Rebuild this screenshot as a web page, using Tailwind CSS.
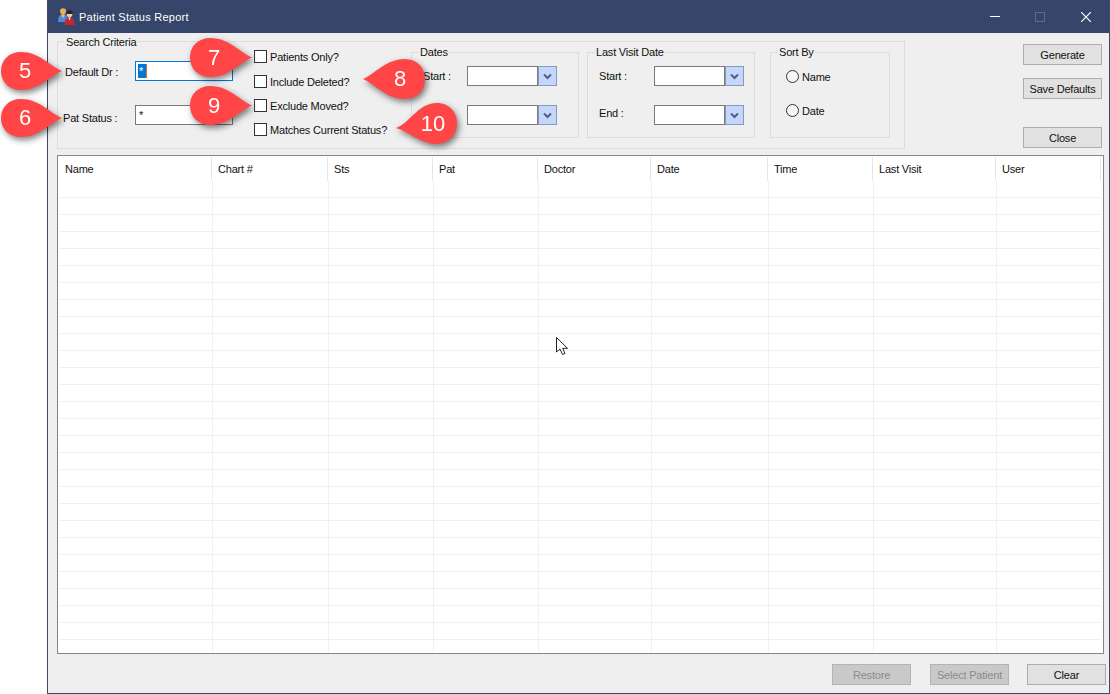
<!DOCTYPE html>
<html lang="en">
<head>
    <meta charset="UTF-8">
    <title>Patient Status Report</title>
    <script src="https://cdn.jsdelivr.net/npm/@tailwindcss/browser@4"></script>
</head>
<body class="bg-white">
<div class="relative flex w-[1110px] h-[694px] overflow-hidden bg-white font-['Liberation_Sans',Arial,sans-serif] text-[11px] tracking-[-0.2px] leading-none text-[#111]">
    <!-- Left of the window -->
    <div class="w-[47px] shrink-0"></div>

    <!-- Window -->
    <div class="flex flex-col flex-1 border-x border-b border-[#3a4a6c] bg-[#efefef]">
        <!-- Title bar -->
        <header class="flex items-center h-[33px] shrink-0 bg-[#35466a] text-white">
            <svg class="ml-[10px] w-[17px] h-[17px]" viewBox="0 0 17 17">
                <circle cx="5" cy="3.2" r="3" fill="#e8b25a"/>
                <path d="M0 14 C0 8 2.5 6 5 6 C7.5 6 10 8 10 14 Z" fill="#4a8ae0"/>
                <path d="M3.2 6.2 L6.8 6.2 L5.8 9.5 L4.2 9.5 Z" fill="#e8c04a"/>
                <circle cx="11.5" cy="6.5" r="2.8" fill="#f0c9a0"/>
                <path d="M8 4.5 L11.5 1.5 L15 4.5 L14.5 6 L8.5 6 Z" fill="#1d2433"/>
                <path d="M6.5 17 C6.5 11.5 8.5 9.5 11.5 9.5 C14.5 9.5 16.5 11.5 16.5 17 Z" fill="#c9252d"/>
                <path d="M10.3 9.5 L12.7 9.5 L11.5 12.5 Z" fill="#f4f4f4"/>
            </svg>
            <span class="ml-[4px] mt-px text-[11px] tracking-[0.25px]">Patient Status Report</span>
            <div class="ml-auto flex items-center">
                <div class="flex justify-center items-center w-[46px] h-[33px] pl-[2px]"><div class="w-[10px] h-px bg-white"></div></div>
                <div class="flex justify-center items-center w-[46px] h-[33px]"><div class="w-[10px] h-[10px] border border-[#5d6c8c]"></div></div>
                <div class="flex justify-center items-center w-[46px] h-[33px]">
                    <svg class="w-[10px] h-[10px]" viewBox="0 0 10 10"><path d="M0 0 L10 10 M10 0 L0 10" stroke="#fff" stroke-width="1.2"/></svg>
                </div>
            </div>
        </header>

        <main class="flex flex-col flex-1 pl-[9px] pr-[5px] pt-[8px]">
            <!-- Search area -->
            <div class="flex h-[108px] shrink-0">
                <section class="relative flex w-[848px] h-[108px] border border-[#dcdcdc]">
                    <span class="absolute -top-[5px] left-[7px] px-px bg-[#efefef]">Search Criteria</span>

                    <div class="flex flex-col w-[196px] pt-[19px]">
                        <div class="flex h-[20px] items-center">
                            <label class="w-[77px] pl-[7px] mt-[2px]">Default Dr :</label>
                            <div class="w-[98px] h-[20px] border border-[#0078d7] bg-white pl-[2px] pt-[2px]">
                                <div class="flex w-[9px] h-[14px] bg-[#0078d7] text-white pl-[1px] pt-[2px] border-r border-[#e07020]">*</div>
                            </div>
                        </div>
                        <div class="flex h-[20px] items-center mt-[24px]">
                            <label class="w-[77px] pl-[5px] mt-[6px]">Pat Status :</label>
                            <div class="w-[98px] h-[20px] border border-[#7a7a7a] bg-white pl-[3px] pt-[4px]">*</div>
                        </div>
                    </div>

                    <div class="flex flex-col w-[157px]">
                        <label class="flex items-center mt-[8px] h-[13px]"><span class="w-[13px] h-[13px] border border-[#333] bg-white"></span><span class="ml-[3px] mt-[2px]">Patients Only?</span></label>
                        <label class="flex items-center mt-[12px] h-[13px]"><span class="w-[13px] h-[13px] border border-[#333] bg-white"></span><span class="ml-[3px] mt-[2px]">Include Deleted?</span></label>
                        <label class="flex items-center mt-[11px] h-[13px]"><span class="w-[13px] h-[13px] border border-[#333] bg-white"></span><span class="ml-[3px] mt-[2px]">Exclude Moved?</span></label>
                        <label class="flex items-center mt-[11px] h-[13px]"><span class="w-[13px] h-[13px] border border-[#333] bg-white"></span><span class="ml-[3px] mt-[2px]">Matches Current Status?</span></label>
                    </div>

                    <!-- Dates -->
                    <fieldset class="relative flex flex-col w-[168px] h-[86px] mt-[10px] pt-[13px] border border-[#dcdcdc]">
                        <span class="absolute -top-[6px] left-[7px] px-px bg-[#efefef]">Dates</span>
                        <div class="flex h-[20px] items-center">
                            <label class="w-[55px] pl-[11px]">Start :</label>
                            <div class="w-[71px] h-[20px] border border-[#7a7a7a] bg-white"></div>
                            <div class="flex w-[19px] h-[20px] items-center justify-center border border-[#7f9db9] bg-[#c5d6fc]">
                                <svg class="w-[9px] h-[7px]" viewBox="0 0 9 7"><path d="M1 1.5 L4.5 5 L8 1.5" fill="none" stroke="#4d6185" stroke-width="2"/></svg>
                            </div>
                        </div>
                        <div class="flex h-[20px] items-center mt-[19px]">
                            <div class="w-[55px]"></div>
                            <div class="w-[71px] h-[20px] border border-[#7a7a7a] bg-white"></div>
                            <div class="flex w-[19px] h-[20px] items-center justify-center border border-[#7f9db9] bg-[#c5d6fc]">
                                <svg class="w-[9px] h-[7px]" viewBox="0 0 9 7"><path d="M1 1.5 L4.5 5 L8 1.5" fill="none" stroke="#4d6185" stroke-width="2"/></svg>
                            </div>
                        </div>
                    </fieldset>

                    <!-- Last visit date -->
                    <fieldset class="relative flex flex-col w-[168px] h-[86px] mt-[10px] ml-[8px] pt-[13px] border border-[#dcdcdc]">
                        <span class="absolute -top-[6px] left-[7px] px-px bg-[#efefef]">Last Visit Date</span>
                        <div class="flex h-[20px] items-center">
                            <label class="w-[66px] pl-[11px]">Start :</label>
                            <div class="w-[71px] h-[20px] border border-[#7a7a7a] bg-white"></div>
                            <div class="flex w-[19px] h-[20px] items-center justify-center border border-[#7f9db9] bg-[#c5d6fc]">
                                <svg class="w-[9px] h-[7px]" viewBox="0 0 9 7"><path d="M1 1.5 L4.5 5 L8 1.5" fill="none" stroke="#4d6185" stroke-width="2"/></svg>
                            </div>
                        </div>
                        <div class="flex h-[20px] items-center mt-[19px]">
                            <label class="w-[66px] pl-[11px] -mt-[4px]">End :</label>
                            <div class="w-[71px] h-[20px] border border-[#7a7a7a] bg-white"></div>
                            <div class="flex w-[19px] h-[20px] items-center justify-center border border-[#7f9db9] bg-[#c5d6fc]">
                                <svg class="w-[9px] h-[7px]" viewBox="0 0 9 7"><path d="M1 1.5 L4.5 5 L8 1.5" fill="none" stroke="#4d6185" stroke-width="2"/></svg>
                            </div>
                        </div>
                    </fieldset>

                    <!-- Sort by -->
                    <fieldset class="relative flex flex-col w-[120px] h-[86px] mt-[10px] ml-[15px] pt-[17px] pl-[15px] border border-[#dcdcdc]">
                        <span class="absolute -top-[6px] left-[7px] px-px bg-[#efefef]">Sort By</span>
                        <label class="flex items-center h-[13px]"><span class="w-[13px] h-[13px] rounded-full border border-[#333] bg-[#f6f6f6]"></span><span class="ml-[3px] mt-px">Name</span></label>
                        <label class="flex items-center h-[13px] mt-[21px]"><span class="w-[13px] h-[13px] rounded-full border border-[#333] bg-[#f6f6f6]"></span><span class="ml-[3px] mt-px">Date</span></label>
                    </fieldset>
                </section>

                <div class="flex flex-col w-[79px] ml-[118px] pt-[3px]">
                    <button class="h-[21px] pt-px border border-[#adadad] bg-[#e1e1e1]">Generate</button>
                    <button class="h-[21px] pt-px mt-[13px] border border-[#adadad] bg-[#e1e1e1]">Save Defaults</button>
                    <button class="h-[21px] pt-px mt-[28px] border border-[#adadad] bg-[#e1e1e1]">Close</button>
                </div>
            </div>

            <!-- Results list -->
            <div class="flex flex-col h-[499px] mt-[6px] shrink-0 border border-[#85858c] bg-white">
                <div class="flex h-[25px] pl-px shrink-0">
                    <div class="w-[153px] h-[24px] mt-px pl-[6px] pt-[7px] border-r border-[#e6e6e6]">Name</div>
                    <div class="w-[116px] h-[24px] mt-px pl-[6px] pt-[7px] border-r border-[#e6e6e6]">Chart #</div>
                    <div class="w-[105px] h-[24px] mt-px pl-[6px] pt-[7px] border-r border-[#e6e6e6]">Sts</div>
                    <div class="w-[105px] h-[24px] mt-px pl-[6px] pt-[7px] border-r border-[#e6e6e6]">Pat</div>
                    <div class="w-[113px] h-[24px] mt-px pl-[6px] pt-[7px] border-r border-[#e6e6e6]">Doctor</div>
                    <div class="w-[117px] h-[24px] mt-px pl-[6px] pt-[7px] border-r border-[#e6e6e6]">Date</div>
                    <div class="w-[105px] h-[24px] mt-px pl-[6px] pt-[7px] border-r border-[#e6e6e6]">Time</div>
                    <div class="w-[123px] h-[24px] mt-px pl-[6px] pt-[7px] border-r border-[#e6e6e6]">Last Visit</div>
                    <div class="w-[105px] h-[24px] mt-px pl-[6px] pt-[7px] border-r border-[#e6e6e6]">User</div>
                </div>
                <div class="flex w-[1042px] h-[472px] ml-px bg-[repeating-linear-gradient(to_bottom,transparent_0,transparent_16px,#f0f0f0_16px,#f0f0f0_17px)]">
                    <div class="w-[154px] border-r border-[#f0f0f0]"></div>
                    <div class="w-[116px] border-r border-[#f0f0f0]"></div>
                    <div class="w-[105px] border-r border-[#f0f0f0]"></div>
                    <div class="w-[105px] border-r border-[#f0f0f0]"></div>
                    <div class="w-[113px] border-r border-[#f0f0f0]"></div>
                    <div class="w-[117px] border-r border-[#f0f0f0]"></div>
                    <div class="w-[105px] border-r border-[#f0f0f0]"></div>
                    <div class="w-[123px] border-r border-[#f0f0f0]"></div>
                </div>
            </div>

            <!-- Bottom buttons -->
            <div class="flex justify-end mt-[10px] -mr-[2px]">
                <button class="w-[79px] h-[21px] pt-px border border-[#b4b4b4] bg-[#c9c9c9] text-[#8c8c8c]">Restore</button>
                <button class="w-[79px] h-[21px] pt-px ml-[19px] border border-[#b4b4b4] bg-[#c9c9c9] text-[#8c8c8c]">Select Patient</button>
                <button class="w-[79px] h-[21px] pt-px ml-[18px] border border-[#adadad] bg-[#e1e1e1]">Clear</button>
            </div>
        </main>
    </div>

    <!-- Annotation callouts, placed over the screenshot -->
    <div class="absolute left-[1px] top-[52px] w-[61px] h-[38px] tracking-normal drop-shadow-[2px_3px_3px_rgba(0,0,0,0.5)]">
        <svg class="absolute inset-0 w-full h-full" viewBox="0 0 61 38"><path d="M61 19 C49 14 38 0 20 0 C8 0 0 8 0 19 C0 30 8 38 20 38 C38 38 49 24 61 19 Z" fill="#ff4545"/></svg>
        <span class="absolute left-0 top-0 w-[48px] h-[38px] flex items-center justify-center text-white text-[22px]">5</span>
    </div>
    <div class="absolute left-[1px] top-[99px] w-[61px] h-[38px] tracking-normal drop-shadow-[2px_3px_3px_rgba(0,0,0,0.5)]">
        <svg class="absolute inset-0 w-full h-full" viewBox="0 0 61 38"><path d="M61 19 C49 14 38 0 20 0 C8 0 0 8 0 19 C0 30 8 38 20 38 C38 38 49 24 61 19 Z" fill="#ff4545"/></svg>
        <span class="absolute left-0 top-0 w-[48px] h-[38px] flex items-center justify-center text-white text-[22px]">6</span>
    </div>
    <div class="absolute left-[190px] top-[38px] w-[62px] h-[39px] tracking-normal drop-shadow-[2px_3px_3px_rgba(0,0,0,0.5)]">
        <svg class="absolute inset-0 w-full h-full" viewBox="0 0 61 38" preserveAspectRatio="none"><path d="M61 19 C49 14 38 0 20 0 C8 0 0 8 0 19 C0 30 8 38 20 38 C38 38 49 24 61 19 Z" fill="#ff4545"/></svg>
        <span class="absolute left-0 top-0 w-[48px] h-[39px] flex items-center justify-center text-white text-[22px]">7</span>
    </div>
    <div class="absolute left-[190px] top-[86px] w-[62px] h-[39px] tracking-normal drop-shadow-[2px_3px_3px_rgba(0,0,0,0.5)]">
        <svg class="absolute inset-0 w-full h-full" viewBox="0 0 61 38" preserveAspectRatio="none"><path d="M61 19 C49 14 38 0 20 0 C8 0 0 8 0 19 C0 30 8 38 20 38 C38 38 49 24 61 19 Z" fill="#ff4545"/></svg>
        <span class="absolute left-0 top-0 w-[48px] h-[39px] flex items-center justify-center text-white text-[22px]">9</span>
    </div>
    <div class="absolute left-[363px] top-[59px] w-[62px] h-[40px] tracking-normal drop-shadow-[2px_3px_3px_rgba(0,0,0,0.5)]">
        <svg class="absolute inset-0 w-full h-full" viewBox="0 0 61 38" preserveAspectRatio="none"><path d="M0 19 C12 14 23 0 41 0 C53 0 61 8 61 19 C61 30 53 38 41 38 C23 38 12 24 0 19 Z" fill="#ff4545"/></svg>
        <span class="absolute right-0 top-0 w-[50px] h-[40px] flex items-center justify-center text-white text-[22px]">8</span>
    </div>
    <div class="absolute left-[396px] top-[103px] w-[61px] h-[41px] tracking-normal drop-shadow-[2px_3px_3px_rgba(0,0,0,0.5)]">
        <svg class="absolute inset-0 w-full h-full" viewBox="0 0 61 41"><path d="M0 25 C13 21 22 0 41 0 C53 0 61 9 61 20 C61 32 52 41 40 41 C25 41 14 29 0 25 Z" fill="#ff4545"/></svg>
        <span class="absolute right-0 top-0 w-[48px] h-[41px] flex items-center justify-center text-white text-[22px]">10</span>
    </div>

    <!-- Mouse pointer -->
    <svg class="absolute left-[555px] top-[336px] w-[15px] h-[21px]" viewBox="0 0 15 21">
        <path d="M1.5 1.5 L1.5 16 L5 13 L7.5 18.5 L10 17.5 L7.7 12.3 L12.5 12.3 Z" fill="#fff" stroke="#222" stroke-width="1"/>
    </svg>
</div>
</body>
</html>
